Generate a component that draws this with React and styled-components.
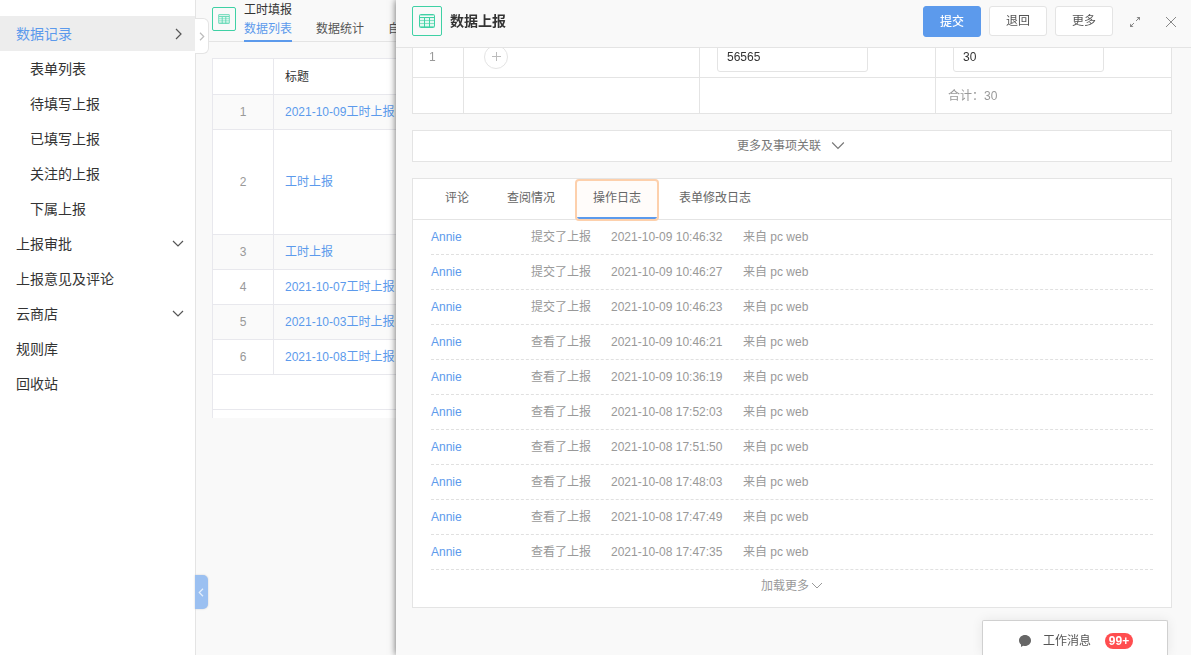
import React from "react";
import styled, { createGlobalStyle, css } from "styled-components";

const blue = "#5c9aec";
const green = "#3fd1a5";
const line = "#e4e4e4";

const GlobalStyle = createGlobalStyle`
  * {
    box-sizing: border-box;
  }
  body {
    margin: 0;
    overflow: hidden;
    background: #f9f9f9;
    color: #333;
    font: 12px/20px "Liberation Sans", "Noto Sans CJK SC", sans-serif;
  }
  button, input {
    font: inherit;
    color: inherit;
  }
  button {
    padding: 0;
    border: 0;
    background: none;
    cursor: pointer;
  }
  a {
    color: inherit;
    text-decoration: none;
  }
  svg {
    display: block;
    flex: none;
  }
`;

const Layout = styled.div`
  display: flex;
  height: 100vh;
  overflow: hidden;
`;

/** Sidebar */
const Sidebar = styled.nav`
  position: relative;
  flex: 0 0 196px;
  padding-top: 16px;
  background: #fff;
  border-right: 1px solid ${line};
`;

const MenuItem = styled.a`
  display: flex;
  align-items: center;
  justify-content: space-between;
  height: 35px;
  padding: 0 11px 0 ${props => (props.$sub ? "30px" : "16px")};
  font-size: 14px;
  color: ${props => (props.$active ? blue : "#333")};
  background: ${props => (props.$active ? "#ededed" : "none")};
`;

const ExpandTab = styled.button`
  position: absolute;
  top: 18px;
  left: 100%;
  z-index: 1;
  display: flex;
  align-items: center;
  justify-content: center;
  width: 14px;
  height: 36px;
  background: #fff;
  border: 1px solid ${line};
  border-left: 0;
  border-radius: 0 6px 6px 0;
`;

const CollapseTab = styled(ExpandTab)`
  top: auto;
  bottom: 46px;
  left: 195px;
  width: 13px;
  height: 34px;
  background: #9bc0f1;
  border: 0;
  border-radius: 0 5px 5px 0;
  box-shadow: 0 0 2px #ccc;
`;

/** List page */
const Main = styled.main`
  flex: 1;
  min-width: 0;
`;

const PageHead = styled.header`
  display: flex;
  gap: 8px;
  height: 42px;
  padding-left: 16px;
  border-bottom: 1px solid ${line};
`;

const IconBox = styled.span`
  display: flex;
  flex: none;
  align-items: center;
  justify-content: center;
  width: ${props => props.$size}px;
  height: ${props => props.$size}px;
  color: ${green};
  border: 1px solid ${green};
  border-radius: 2px;
`;

const PageIcon = styled(IconBox)`
  margin-top: 7px;
`;

const PageTitle = styled.h1`
  margin: 0;
  font-size: 12px;
  line-height: 20px;
  font-weight: 400;
`;

const PageTabs = styled.div`
  display: flex;
  gap: 24px;
`;

const PageTab = styled.a`
  height: 22px;
  line-height: 18px;
  white-space: nowrap;
  color: ${props => (props.$active ? blue : "#555")};
  border-bottom: 2px solid ${props => (props.$active ? blue : "transparent")};
`;

const ListWrap = styled.div`
  margin: 16px 16px 0;
  padding-bottom: 8px;
  background: #fff;
  border: 1px solid #e8e8ed;
  border-bottom: 0;
`;

const ListTable = styled.table`
  width: 100%;
  table-layout: fixed;
  border-spacing: 0;
`;

const ListCell = styled.td`
  height: ${props => (props.$tall ? 105 : 35)}px;
  padding: 0 11px;
  color: ${blue};
  border-bottom: 1px solid #e8e8ed;
  tr:nth-child(odd) > & {
    background: ${props => (props.$plain ? "none" : "#fafafa")};
  }
`;

const ListIndex = styled(ListCell)`
  color: #999;
  text-align: center;
  border-right: 1px solid #e8e8ed;
`;

const ListHead = styled.th`
  width: ${props => props.$width || "auto"};
  height: 36px;
  padding: 0 11px;
  text-align: left;
  font-weight: 400;
  border-bottom: 1px solid #e8e8ed;
  border-right: ${props => (props.$width ? "1px solid #e8e8ed" : 0)};
`;

/** Drawer over the list */
const Drawer = styled.section`
  position: fixed;
  top: 0;
  right: 0;
  bottom: 0;
  left: 396px;
  z-index: 2;
  background: #f9f9f9;
  box-shadow: 0 0 7px rgba(0, 0, 0, 0.6);
`;

const DrawerHead = styled.header`
  display: flex;
  gap: 8px;
  height: 48px;
  padding: 6px 6px 0 16px;
  border-bottom: 1px solid ${line};
`;

const DrawerTitle = styled.h2`
  flex: 1;
  margin: 0;
  font-size: 14px;
  line-height: 30px;
  font-weight: 700;
`;

const Button = styled.button`
  width: 58px;
  height: 30px;
  color: #555;
  background: #fff;
  border: 1px solid ${line};
  border-radius: 3px;
  ${props =>
    props.$primary &&
    css`
      height: 31px;
      color: #fff;
      font-weight: 500;
      background: ${blue};
      border-color: ${blue};
    `}
`;

const IconButton = styled.button`
  display: flex;
  align-items: center;
  justify-content: center;
  width: 28px;
  height: 32px;
  color: #888;
`;

const DrawerBody = styled.div`
  display: flex;
  flex-direction: column;
  gap: 16px;
  padding: 0 19px 0 16px;
`;

// only the last rows of the form are in view
const FormView = styled.div`
  display: flex;
  align-items: flex-end;
  height: 66px;
  overflow: hidden;
`;

const FormTable = styled.table`
  width: 100%;
  table-layout: fixed;
  border-spacing: 0;
  background: #fff;
  border-left: 1px solid ${line};
`;

const FormCell = styled.td`
  width: ${props => props.$width || "auto"};
  height: ${props => props.$height}px;
  padding: 0 ${props => props.$pad || 12}px;
  color: #999;
  border: 1px solid ${line};
  border-width: 0 1px 1px 0;
`;

const AddButton = styled.button`
  display: flex;
  align-items: center;
  justify-content: center;
  width: 24px;
  height: 24px;
  color: #bbb;
  border: 1px solid ${line};
  border-radius: 50%;
`;

const Input = styled.input`
  display: block;
  width: 151px;
  max-width: 100%;
  height: 30px;
  padding: 0 9px;
  color: #333;
  background: #fff;
  border: 1px solid ${line};
  border-radius: 3px;
`;

const MoreBar = styled.button`
  display: flex;
  align-items: center;
  justify-content: center;
  gap: 10px;
  height: 32px;
  padding-right: 2px;
  color: #777;
  background: #fff;
  border: 1px solid ${line};
`;

const Panel = styled.section`
  background: #fff;
  border: 1px solid ${line};
`;

const Tabs = styled.div`
  display: flex;
  gap: 6px;
  height: 41px;
  padding: 2px 16px 0;
  border-bottom: 1px solid ${line};
`;

const Tab = styled.button`
  height: 38px;
  padding: 0 16px 4px;
  color: #666;
  ${props =>
    props.$active &&
    css`
      padding-bottom: 2px;
      background: #fffcfa;
      border-bottom: 2px solid ${blue};
      border-radius: 2px;
      outline: 2px solid #fdd0ac;
    `}
`;

const Logs = styled.ul`
  margin: 0;
  padding: 0 18px;
  list-style: none;
`;

const LogItem = styled.li`
  display: flex;
  gap: 20px;
  height: 35px;
  line-height: 34px;
  white-space: nowrap;
  color: #999;
  border-bottom: 1px dashed #e0e0e0;
`;

const LogUser = styled.a`
  width: 80px;
  color: ${blue};
`;

const LogTime = styled.time`
  width: 112px;
`;

const LoadMore = styled.button`
  display: flex;
  align-items: center;
  justify-content: center;
  gap: 2px;
  width: 100%;
  height: 37px;
  padding-bottom: 6px;
  color: #999;
`;

const MessageBar = styled.button`
  position: fixed;
  right: 23px;
  bottom: 0;
  z-index: 3;
  display: flex;
  align-items: center;
  justify-content: center;
  gap: 12px;
  width: 186px;
  height: 35px;
  padding: 6px 0 0 2px;
  color: #555;
  background: #fff;
  border: 1px solid #d0d0d0;
  border-bottom: 0;
  border-radius: 2px 2px 0 0;
  box-shadow: 0 0 12px rgba(0, 0, 0, 0.08);
`;

const Badge = styled.span`
  width: 28px;
  height: 16px;
  margin-left: 2px;
  color: #fff;
  line-height: 16px;
  font-weight: 700;
  background: #ff4d4f;
  border-radius: 8px;
`;

const paths = {
  right: "M4 1l5 5-5 5",
  left: "M8 1L3 6l5 5",
  down: "M1 3l5 5 5-5"
};

const Chevron = ({ to, size = 12, color = "currentColor", stroke = 1 }) => (
  <svg width={size} height={size} viewBox="0 0 12 12" fill="none">
    <path d={paths[to]} stroke={color} strokeWidth={stroke} />
  </svg>
);

const GridIcon = ({ width, height }) => (
  <svg
    width={width}
    height={height}
    viewBox="0 0 16 14"
    fill="none"
    stroke="currentColor"
  >
    <rect x="1" y="3" width="14" height="10" fill="#e3f8f1" stroke="none" />
    <rect x="0.5" y="0.5" width="15" height="13" rx="1" />
    <path d="M1 1.5h14" opacity="0.4" />
    <path d="M1 3.5h14M5.5 4v9M10.5 4v9" />
    <path d="M1 6.5h14M1 9.5h14M1 12.5h14" opacity="0.6" />
  </svg>
);

const menu = [
  { title: "数据记录", active: true, arrow: "right" },
  { title: "表单列表", sub: true },
  { title: "待填写上报", sub: true },
  { title: "已填写上报", sub: true },
  { title: "关注的上报", sub: true },
  { title: "下属上报", sub: true },
  { title: "上报审批", arrow: "down" },
  { title: "上报意见及评论" },
  { title: "云商店", arrow: "down" },
  { title: "规则库" },
  { title: "回收站" }
];

const records = [
  "2021-10-09工时上报",
  "工时上报",
  "工时上报",
  "2021-10-07工时上报",
  "2021-10-03工时上报",
  "2021-10-08工时上报"
];

const logs = [
  ["提交了上报", "2021-10-09 10:46:32"],
  ["提交了上报", "2021-10-09 10:46:27"],
  ["提交了上报", "2021-10-09 10:46:23"],
  ["查看了上报", "2021-10-09 10:46:21"],
  ["查看了上报", "2021-10-09 10:36:19"],
  ["查看了上报", "2021-10-08 17:52:03"],
  ["查看了上报", "2021-10-08 17:51:50"],
  ["查看了上报", "2021-10-08 17:48:03"],
  ["查看了上报", "2021-10-08 17:47:49"],
  ["查看了上报", "2021-10-08 17:47:35"]
];

const SideMenu = () => (
  <Sidebar>
    {menu.map(item => (
      <MenuItem
        href="#"
        key={item.title}
        $sub={item.sub}
        $active={item.active}
      >
        {item.title}
        {item.arrow && <Chevron to={item.arrow} color="#555" stroke={1.2} />}
      </MenuItem>
    ))}
    <ExpandTab aria-label="展开">
      <Chevron to="right" size={9} color="#bbb" stroke={1.6} />
    </ExpandTab>
    <CollapseTab aria-label="收起">
      <Chevron to="left" size={9} color="#e4effc" stroke={1.6} />
    </CollapseTab>
  </Sidebar>
);

const RecordList = () => (
  <Main>
    <PageHead>
      <PageIcon $size={24}>
        <GridIcon width={12} height={10} />
      </PageIcon>
      <div>
        <PageTitle>工时填报</PageTitle>
        <PageTabs>
          <PageTab href="#" $active>数据列表</PageTab>
          <PageTab href="#">数据统计</PageTab>
          <PageTab href="#">自</PageTab>
        </PageTabs>
      </div>
    </PageHead>
    <ListWrap>
      <ListTable>
        <thead>
          <tr>
            <ListHead $width="61px" />
            <ListHead>标题</ListHead>
          </tr>
        </thead>
        <tbody>
          {records.map((title, i) => (
            <tr key={i}>
              <ListIndex $tall={i === 1}>{i + 1}</ListIndex>
              <ListCell $tall={i === 1}>
                <a href="#">{title}</a>
              </ListCell>
            </tr>
          ))}
          <tr>
            <ListCell colSpan={2} $plain />
          </tr>
        </tbody>
      </ListTable>
    </ListWrap>
  </Main>
);

const ReportForm = () => (
  <FormView>
    <FormTable>
      <tbody>
        <tr>
          <FormCell $width="51px" $height={42} $pad={16}>1</FormCell>
          <FormCell $height={42} $pad={20}>
            <AddButton aria-label="添加">
              <svg width="9" height="9" stroke="currentColor">
                <path d="M0 4.5h9M4.5 0v9" />
              </svg>
            </AddButton>
          </FormCell>
          <FormCell $height={42} $pad={17}>
            <Input aria-label="数值" defaultValue="56565" />
          </FormCell>
          <FormCell $height={42} $pad={17}>
            <Input aria-label="工时" defaultValue="30" />
          </FormCell>
        </tr>
        <tr>
          <FormCell $height={36} />
          <FormCell $height={36} />
          <FormCell $height={36} />
          <FormCell $height={36}>合计：30</FormCell>
        </tr>
      </tbody>
    </FormTable>
  </FormView>
);

const LogPanel = () => (
  <Panel>
    <Tabs role="tablist">
      <Tab role="tab">评论</Tab>
      <Tab role="tab">查阅情况</Tab>
      <Tab role="tab" aria-selected="true" $active>操作日志</Tab>
      <Tab role="tab">表单修改日志</Tab>
    </Tabs>
    <Logs>
      {logs.map(([action, time]) => (
        <LogItem key={time}>
          <LogUser href="#">Annie</LogUser>
          <span>{action}</span>
          <LogTime>{time}</LogTime>
          <span>来自 pc web</span>
        </LogItem>
      ))}
    </Logs>
    <LoadMore>
      加载更多
      <Chevron to="down" />
    </LoadMore>
  </Panel>
);

const App = () => (
  <Layout>
    <GlobalStyle />
    <SideMenu />
    <RecordList />
    <Drawer>
      <DrawerHead>
        <IconBox $size={30}>
          <GridIcon width={16} height={14} />
        </IconBox>
        <DrawerTitle>数据上报</DrawerTitle>
        <Button $primary>提交</Button>
        <Button>退回</Button>
        <Button>更多</Button>
        <IconButton aria-label="全屏">
          <svg width="12" height="12" fill="currentColor" stroke="currentColor">
            <path d="M2 10l3-3M7 5l3-3" />
            <path d="M7.500 1H11v3.500zM1 7.500V11h3.500z" stroke="none" />
          </svg>
        </IconButton>
        <IconButton aria-label="关闭">
          <svg width="12" height="12" stroke="currentColor">
            <path d="M1 1l10 10M11 1L1 11" />
          </svg>
        </IconButton>
      </DrawerHead>
      <DrawerBody>
        <ReportForm />
        <MoreBar>
          更多及事项关联
          <Chevron to="down" size={14} />
        </MoreBar>
        <LogPanel />
      </DrawerBody>
    </Drawer>
    <MessageBar>
      <svg width="12" height="12" fill="#666">
        <path d="M6 0c3.300 0 6 2.400 6 5.500S9.300 11 6 11c-.7 0-1.300-.1-1.900-.3L2 12V9.500C.8 8.500 0 7.100 0 5.500 0 2.400 2.700 0 6 0z" />
      </svg>
      工作消息
      <Badge>99+</Badge>
    </MessageBar>
  </Layout>
);

export default App;
